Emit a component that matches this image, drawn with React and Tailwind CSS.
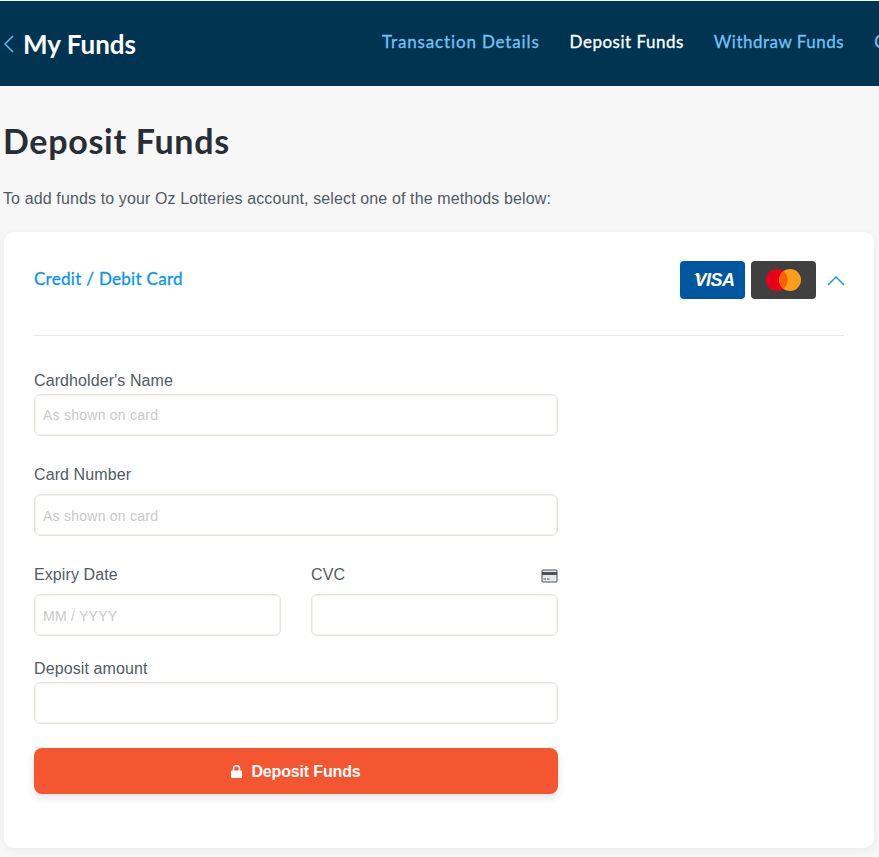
const heading = "font-['Lato','Liberation_Sans',sans-serif]";

function Field({ label, placeholder, className = "", extra = null, inputGap = "mt-[2px]" }) {
  return (
    <div className={className}>
      <div className="flex h-[22px] items-center justify-between text-[16px] leading-[22px] tracking-[0.1px] text-[#525b64]">
        <span>{label}</span>
        {extra}
      </div>
      <input
        readOnly
        placeholder={placeholder}
        className={`${inputGap} block h-[42px] w-full rounded-[6px] border border-[#e4e3dc] bg-white px-[8px] text-[14px] tracking-[0.25px] shadow-[inset_0_0_0_1px_#f3f2ee] placeholder:text-[#c9c9c9]`}
      />
    </div>
  );
}

function CardIcon() {
  return (
    <svg width="17" height="14" viewBox="0 0 17 14" className="mt-[2px]">
      <rect x="0.5" y="0.5" width="16" height="13" rx="1.5" fill="#4a535c" />
      <rect x="1.5" y="1.5" width="14" height="1.5" fill="#e8e8e8" />
      <rect x="1.5" y="6" width="14" height="6.5" fill="#e8e8e8" />
      <rect x="2.5" y="9.5" width="2.5" height="1" fill="#4a535c" />
      <rect x="6" y="9.5" width="2.5" height="1" fill="#4a535c" />
    </svg>
  );
}

function VisaBadge() {
  return (
    <div className="relative flex h-[38px] w-[65px] items-center justify-center rounded-[4px] bg-[#00579f]">
      <svg width="9" height="7" viewBox="0 0 9 7" className="absolute left-[13px] top-[13px]">
        <path d="M0 0h5.500c1 0 1.500.5 1.800 1.500L8.500 7C6.500 3.500 3.500 1 0 0z" fill="#faa61a" />
      </svg>
      <span className="relative pl-[4px] font-['Liberation_Sans',sans-serif] text-[18px] font-bold italic tracking-[-0.5px] text-white">
        VISA
      </span>
    </div>
  );
}

function MastercardBadge() {
  return (
    <div className="flex h-[38px] w-[65px] items-center justify-center rounded-[4px] bg-[#404040]">
      <svg width="35" height="22" viewBox="0 0 35 22">
        <circle cx="11" cy="11" r="11" fill="#eb001b" />
        <circle cx="24" cy="11" r="11" fill="#f79e1b" />
        <path d="M17.500 2.360a11 11 0 0 1 0 17.280a11 11 0 0 1 0-17.280z" fill="#ff5f00" />
      </svg>
    </div>
  );
}

function LockIcon() {
  return (
    <svg width="11" height="13" viewBox="0 0 11 13">
      <path d="M2.500 6V3.800a3 3 0 0 1 6 0V6" fill="none" stroke="white" strokeWidth="1.500" />
      <rect x="0" y="5.500" width="11" height="7.500" rx="1.200" fill="white" />
    </svg>
  );
}

export default function App() {
  return (
    <div className="h-[857px] overflow-hidden bg-[#f7f7f7] pt-px font-['Liberation_Sans',Arial,sans-serif]">
      <header className="flex h-[85px] items-center overflow-hidden bg-[#003450]">
        <div className="flex w-[382px] shrink-0 items-center">
          <svg width="10" height="18" viewBox="0 0 10 18" className="ml-[4px] shrink-0">
            <path d="M9 1L1 9l8 8" fill="none" stroke="#6cb8ee" strokeWidth="1.500" />
          </svg>
          <span className={`${heading} ml-[9px] mt-[2px] whitespace-nowrap text-[26px] font-bold text-white`}>My Funds</span>
        </div>
        <nav className={`${heading} mb-[3px] flex shrink-0 gap-[30px] whitespace-nowrap text-[17px] tracking-[0.5px] [-webkit-text-stroke:0.3px]`}>
          <span className="tracking-[0.85px] text-[#74c0f4]">Transaction Details</span>
          <span className="text-white">Deposit Funds</span>
          <span className="text-[#74c0f4]">Withdraw Funds</span>
          <span className="text-[#74c0f4]">Cards</span>
        </nav>
      </header>

      <main className="px-[4px]">
        <h1 className={`${heading} mt-[33px] ml-[-1px] text-[34px] font-bold leading-[44px] tracking-[0.7px] text-[#272e35]`}>Deposit Funds</h1>
        <p className="mt-[25px] ml-[-1px] text-[16px] leading-[22px] tracking-[0.12px] text-[#525b64]">
          To add funds to your Oz Lotteries account, select one of the methods below:
        </p>

        <section className="mt-[22px] h-[616px] w-[870px] rounded-[10px] bg-white px-[30px] shadow-[0_2px_8px_rgba(0,0,0,0.06)]">
          <div className="flex h-[104px] items-center justify-between border-b border-[#e8e8e8] pb-[7px]">
            <span className={`${heading} mb-[2px] text-[17px] tracking-[0.3px] text-[#0a96ee] [-webkit-text-stroke:0.3px]`}>Credit / Debit Card</span>
            <div className="mr-[-1px] flex items-center gap-[6px]">
              <VisaBadge />
              <MastercardBadge />
              <svg width="18" height="11" viewBox="0 0 18 11" className="ml-[5px]">
                <path d="M1 10l8-8 8 8" fill="none" stroke="#1a9bf0" strokeWidth="1.500" />
              </svg>
            </div>
          </div>

          <div className="w-[524px]">
            <Field className="mt-[34px]" label="Cardholder's Name" placeholder="As shown on card" />
            <Field className="mt-[28px]" inputGap="mt-[8px] pt-[2px]" label="Card Number" placeholder="As shown on card" />
            <div className="mt-[28px] flex gap-[30px]">
              <Field className="flex-1" inputGap="mt-[8px] pt-[2px]" label="Expiry Date" placeholder="MM / YYYY" />
              <Field className="flex-1" inputGap="mt-[8px] pt-[2px]" label="CVC" extra={<CardIcon />} />
            </div>
            <Field className="mt-[22px]" label="Deposit amount" />
            <button className="mt-[24px] flex h-[46px] w-full items-center justify-center gap-[9px] rounded-[8px] bg-[#f55632] pt-px text-[16px] font-bold tracking-[-0.15px] text-white shadow-[0_4px_10px_rgba(0,0,0,0.1)]">
              <LockIcon />
              Deposit Funds
            </button>
          </div>
        </section>
      </main>
    </div>
  );
}
